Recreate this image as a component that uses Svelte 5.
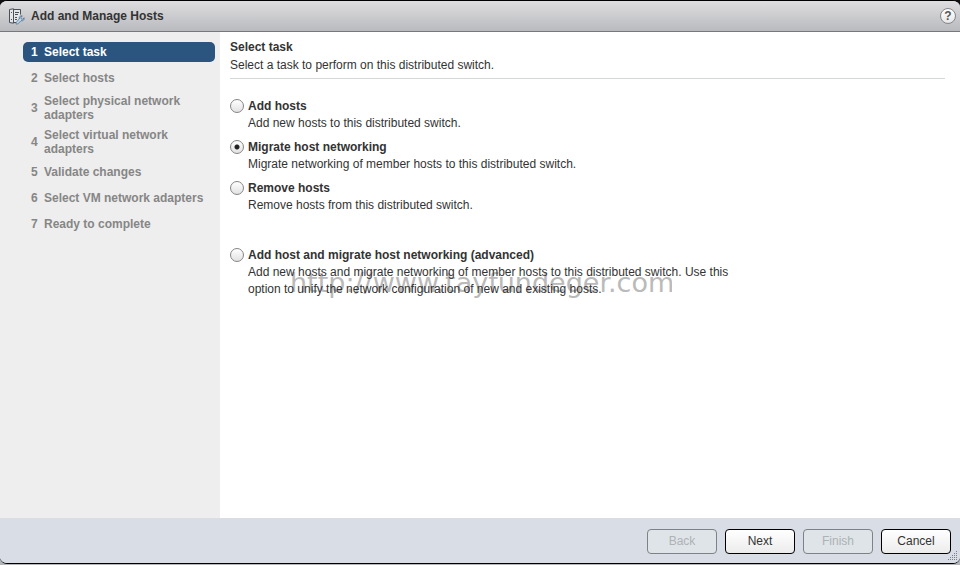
<script lang="ts">
	type Task = { id: string; title: string; text: string; advanced?: boolean };

	const steps = [
		'Select task',
		'Select hosts',
		'Select physical network adapters',
		'Select virtual network adapters',
		'Validate changes',
		'Select VM network adapters',
		'Ready to complete'
	];

	const tasks: Task[] = [
		{ id: 'add', title: 'Add hosts', text: 'Add new hosts to this distributed switch.' },
		{
			id: 'migrate',
			title: 'Migrate host networking',
			text: 'Migrate networking of member hosts to this distributed switch.'
		},
		{ id: 'remove', title: 'Remove hosts', text: 'Remove hosts from this distributed switch.' },
		{
			id: 'advanced',
			title: 'Add host and migrate host networking (advanced)',
			text: 'Add new hosts and migrate networking of member hosts to this distributed switch. Use this option to unify the network configuration of new and existing hosts.',
			advanced: true
		}
	];

	// columns per row of the resize grip, top to bottom
	const grip = [1, 2, 3, 4, 5];

	let current = $state(0);
	let selected = $state('migrate');
</script>

<div class="dialog">
	<header class="titlebar">
		<svg class="host-icon" width="17" height="17" viewBox="0 0 17 17" fill="none">
			<path d="M1.5 1.5 5.5.8V15.2L1.5 14.5Z" fill="#e4e6ea" stroke="#4b4f57" />
			<path d="M5.5 1.5h7v5M5.5 14.5h3" stroke="#4b4f57" />
			<path d="M6 2h6v5l-3 7H6Z" fill="#e4e6ea" />
			<path d="M7 4.5h4M7 6.5h3M7 9.5h2M7 11.5h2M3 4.5h1M3 11.5h1" stroke="#4b4f57" />
			<path
				d="M8.2 14.2 11.4 11C10.8 9 12.3 7.4 14.3 7.9L12.8 9.5l.4 1.4 1.4.4 1.5-1.5c.4 2-1.2 3.5-3.1 2.9L9.8 15.9c-1.1 1-2.6-.6-1.6-1.7Z"
				fill="#c5dcee"
				stroke="#45698a"
				stroke-width=".8"
			/>
		</svg>
		<h1>Add and Manage Hosts</h1>
		<button class="help" type="button" aria-label="Help">?</button>
	</header>

	<div class="body">
		<nav class="steps">
			<ol>
				{#each steps as step, i}
					<li class:active={i === current}>
						<span class="num">{i + 1}</span>
						<span class="label">{step}</span>
					</li>
				{/each}
			</ol>
		</nav>

		<main class="content">
			<div class="intro">
				<h2>Select task</h2>
				<p>Select a task to perform on this distributed switch.</p>
			</div>

			<div class="tasks" role="radiogroup" aria-label="Select task">
				{#each tasks as task (task.id)}
					<div class="task" class:advanced={task.advanced}>
						{#if task.advanced}
							<span class="watermark">http://www.tayfundeger.com</span>
						{/if}
						<input
							type="radio"
							name="task"
							id={task.id}
							value={task.id}
							bind:group={selected}
						/>
						<label for={task.id}>{task.title}</label>
						<p>{task.text}</p>
					</div>
				{/each}
			</div>
		</main>
	</div>

	<footer class="actions">
		<button type="button" disabled={current === 0} onclick={() => current--}>Back</button>
		<button type="button" onclick={() => (current = Math.min(current + 1, steps.length - 1))}>
			Next
		</button>
		<button type="button" disabled={current < steps.length - 1}>Finish</button>
		<button type="button">Cancel</button>
		<svg class="grip" width="10" height="10" viewBox="0 0 10 10">
			{#each grip as count, row}
				{#each { length: count } as _, col}
					<rect x={8 - col * 2} y={row * 2} width="1" height="1" fill="#7c8087" />
				{/each}
			{/each}
		</svg>
	</footer>
</div>

<style>
	:global(body) {
		margin: 0;
		background: linear-gradient(#111 50%, #b4b6ba 50%);
	}

	.dialog {
		box-sizing: border-box;
		display: flex;
		flex-direction: column;
		min-height: calc(100vh - 1px);
		margin-bottom: 1px;
		border-top: 1px solid #000;
		border-bottom: 1px solid #000;
		border-radius: 7px;
		overflow: hidden;
		background: #d9dde5;
		color: #333;
		font-family: 'Liberation Sans', Arial, sans-serif;
		font-size: 12px;
		line-height: 17px;
	}

	h1,
	h2,
	p,
	ol {
		margin: 0;
		padding: 0;
		font-size: 12px;
	}

	.titlebar {
		display: flex;
		align-items: center;
		box-sizing: border-box;
		height: 31px;
		padding: 0 4px 0 8px;
		border-bottom: 1px solid #77787c;
		background: linear-gradient(#dedee0, #b9babe);
	}

	.titlebar h1 {
		flex: 1;
		margin-left: 6px;
	}

	.help {
		width: 16px;
		height: 16px;
		padding: 0;
		border: 1px solid #85868a;
		border-radius: 50%;
		background: linear-gradient(#fff, #e6e6e8);
		color: #55565a;
		font: bold 12px/14px 'Liberation Sans', Arial, sans-serif;
	}

	.body {
		flex: 1;
		display: flex;
		background: #fff;
	}

	.steps {
		box-sizing: border-box;
		flex: 0 0 220px;
		padding: 10px 5px 10px 23px;
		background: #eee;
	}

	.steps ol {
		display: flex;
		flex-direction: column;
		gap: 6px;
		list-style: none;
	}

	.steps li {
		display: flex;
		align-items: center;
		min-height: 20px;
		padding-left: 8px;
		border-radius: 5px;
		color: #868686;
		font-weight: bold;
		line-height: 14px;
	}

	.steps li.active {
		background: #2b547f;
		color: #fff;
	}

	.num {
		flex: 0 0 13px;
	}

	.content {
		flex: 1;
		min-width: 0;
		padding: 6px 15px 0 10px;
	}

	.intro {
		padding-bottom: 4px;
		border-bottom: 1px solid #d5d8d8;
	}

	.intro h2 {
		line-height: 18px;
	}

	.intro p {
		line-height: 18px;
	}

	.tasks {
		display: flex;
		flex-direction: column;
		gap: 7px;
		padding-top: 19px;
	}

	.task {
		position: relative;
		display: grid;
		grid-template-columns: 14px 1fr;
		column-gap: 4px;
		align-items: start;
		max-width: 520px;
	}

	.task.advanced {
		margin-top: 26px;
	}

	.task label {
		font-weight: bold;
	}

	.task label,
	.task p {
		position: relative;
	}

	.task p {
		grid-column: 2;
	}

	.task input {
		appearance: none;
		box-sizing: border-box;
		width: 14px;
		height: 14px;
		margin: 1px 0 0;
		border: 1px solid #858585;
		border-radius: 50%;
		background: linear-gradient(#fff, #e2e2e2);
	}

	.task input:checked {
		background:
			radial-gradient(circle, #222 2px, transparent 3px),
			linear-gradient(#fff, #e2e2e2);
	}

	/* sits behind the option text */
	.watermark {
		position: absolute;
		top: 20px;
		left: 60px;
		width: 382px;
		overflow: hidden;
		color: #bababa;
		font-family: 'DejaVu Sans', Verdana, sans-serif;
		font-size: 27px;
		line-height: 32px;
		white-space: nowrap;
		pointer-events: none;
	}

	.actions {
		position: relative;
		display: flex;
		justify-content: flex-end;
		gap: 8px;
		padding: 11px 9px 9px;
		background: #d9dde5;
	}

	.actions button {
		width: 70px;
		height: 25px;
		padding: 0;
		border: 1px solid #000;
		border-radius: 4px;
		background: linear-gradient(#fff, #ececec);
		color: #333;
		font: 12px/17px 'Liberation Sans', Arial, sans-serif;
	}

	.actions button:disabled {
		border-color: #7d8288;
		background: #dfe4e8;
		color: #adb2b5;
	}

	.grip {
		position: absolute;
		right: 2px;
		bottom: 2px;
	}
</style>
